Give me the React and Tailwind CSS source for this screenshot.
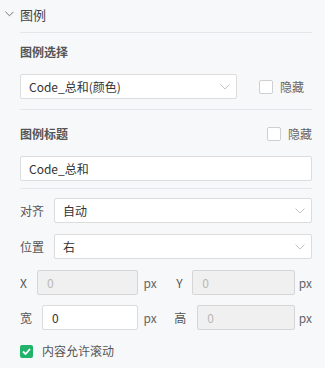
import React from "react";

const Chevron = ({ className }) => (
  <svg className={className} width="10" height="6" viewBox="0 0 10 6" fill="none">
    <path d="M0.5 0.5 L5 5 L9.5 0.5" stroke="currentColor" strokeWidth="1" />
  </svg>
);

const Select = ({ value, className }) => (
  <div className={`h-[25px] bg-white border border-[#dcdcdc] rounded-[2px] flex items-center justify-between pl-[8px] pr-[5px] ${className}`}>
    <span className="text-[12px] text-[#333]">{value}</span>
    <Chevron className="text-[#c4c4c4] mr-[1px]" />
  </div>
);

const Check = () => (
  <div className="w-[14px] h-[14px] bg-white border border-[#cfcfcf] rounded-[2px]" />
);

const NumInput = ({ disabled, className }) => (
  <div
    className={`h-[25px] border rounded-[2px] flex items-center pl-[9px] text-[12px] ${
      disabled ? "bg-[#f0f0f0] border-[#d6d6d6] text-[#b8b8b8]" : "bg-white border-[#dcdcdc] text-[#333]"
    } ${className}`}
  >
    0
  </div>
);

export default function App() {
  return (
    <div
      className="w-[325px] h-[368px] bg-[#f7f8fa] text-[12px] text-[#555] overflow-hidden"
      style={{ fontFamily: '"Noto Sans CJK SC", "Noto Sans", sans-serif' }}
    >
      <div className="h-[28px] flex items-center pl-[5px]">
        <Chevron className="text-[#666] w-[9px] h-[6px]" />
        <span className="ml-[6px] text-[13px] text-[#444] leading-none">图例</span>
      </div>
      <div className="ml-[20px] mr-[13px]">
        <div className="mt-[4px] border-t border-[#e4e6ea]" />
        <div className="mt-[9px] h-[20px] flex items-center font-bold text-[#555] leading-none">图例选择</div>
        <div className="mt-[12px] flex items-center">
          <Select value="Code_总和(颜色)" className="w-[217px]" />
          <div className="ml-[22px]"><Check /></div>
          <span className="ml-[7px] text-[#666]">隐藏</span>
        </div>
        <div className="mt-[10px] border-t border-[#e4e6ea]" />
        <div className="mt-[14px] h-[20px] flex items-center">
          <span className="font-bold text-[#555] leading-none">图例标题</span>
          <div className="ml-auto flex items-center">
            <Check />
            <span className="ml-[7px] text-[#666]">隐藏</span>
          </div>
        </div>
        <div className="mt-[12px] h-[25px] bg-white border border-[#dcdcdc] rounded-[2px] flex items-center pl-[8px] text-[#333]">
          Code_总和
        </div>
        <div className="mt-[7px] border-t border-[#e4e6ea]" />
        <div className="mt-[9px] flex items-center">
          <span className="w-[34px]">对齐</span>
          <Select value="自动" className="flex-1" />
        </div>
        <div className="mt-[11px] flex items-center">
          <span className="w-[34px]">位置</span>
          <Select value="右" className="flex-1" />
        </div>
        <div className="mt-[11px] flex items-center">
          <span className="w-[17px]">X</span>
          <NumInput disabled className="w-[102px]" />
          <span className="ml-[5px] w-[33px] text-[#666]">px</span>
          <span className="w-[16px]">Y</span>
          <NumInput disabled className="w-[103px]" />
          <span className="ml-[4px] text-[#666]">px</span>
        </div>
        <div className="mt-[10px] flex items-center">
          <span className="w-[22px]">宽</span>
          <NumInput className="w-[97px]" />
          <span className="ml-[5px] w-[31px] text-[#666]">px</span>
          <span className="w-[23px]">高</span>
          <NumInput disabled className="w-[98px]" />
          <span className="ml-[4px] text-[#666]">px</span>
        </div>
        <div className="mt-[12px] flex items-center">
          <div className="w-[13px] h-[13px] rounded-[2px] bg-[#22b36b] flex items-center justify-center">
            <svg width="9" height="7" viewBox="0 0 9 7" fill="none">
              <path d="M1 3.5 L3.5 6 L8 1" stroke="white" strokeWidth="1.8" />
            </svg>
          </div>
          <span className="ml-[9px] text-[#555]">内容允许滚动</span>
        </div>
      </div>
    </div>
  );
}
